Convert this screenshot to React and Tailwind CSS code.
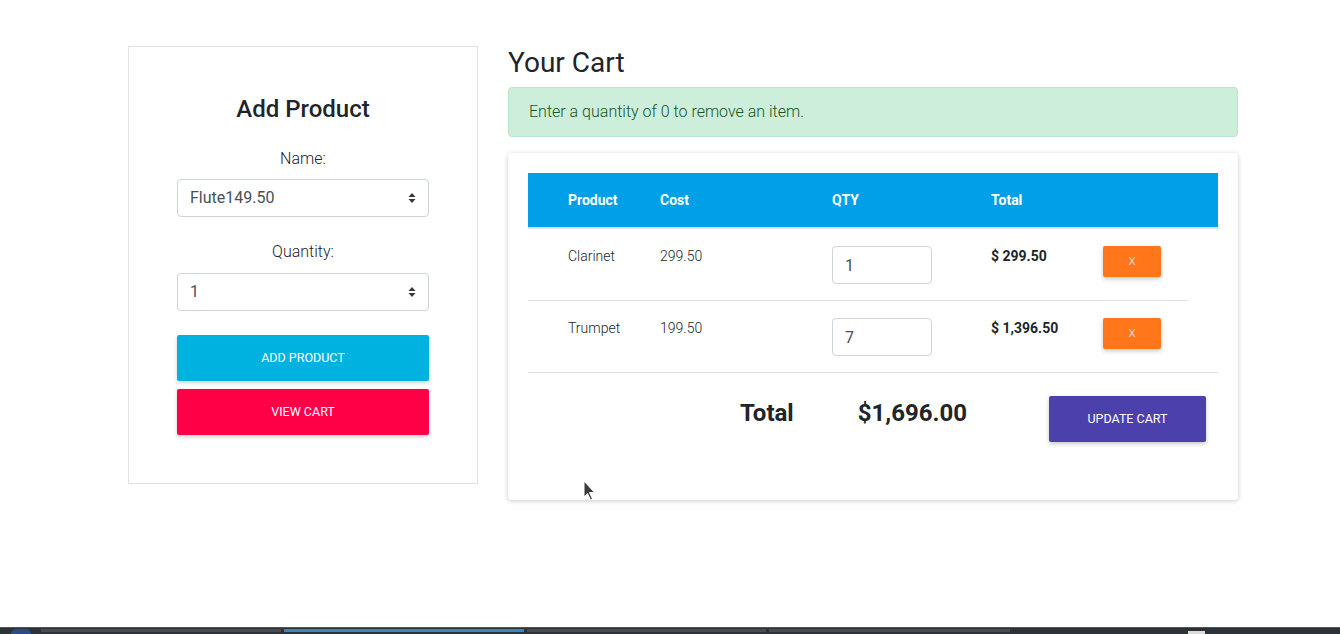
import React from 'react';

const items = [
  { name: 'Clarinet', cost: '299.50', qty: 1, total: '$ 299.50', line: 'w-[660px]' },
  { name: 'Trumpet', cost: '199.50', qty: 7, total: '$ 1,396.50', line: 'w-[690px]' },
];

const cols = 'grid grid-cols-[28px_92px_172px_159px_112px_127px]';

const SelectArrows = () => (
  <svg className="absolute right-[12px] top-1/2 -translate-y-1/2" width="8" height="12" viewBox="0 0 8 12">
    <path d="M4 1 L7.5 5 H0.5 Z" fill="#343a40" />
    <path d="M4 11 L7.5 7 H0.5 Z" fill="#343a40" />
  </svg>
);

const FakeSelect = ({ value }) => (
  <div className="relative w-[252px] h-[38px] mx-auto border border-[#ced4da] rounded-[4px] bg-white flex items-center pl-[12px] text-[16px] text-[#495057]">
    {value}
    <SelectArrows />
  </div>
);

export default function App() {
  return (
    <div className="h-[634px] flex flex-col bg-white text-[#212529] font-['Roboto',sans-serif] overflow-hidden">
      <div className="flex-1 flex pt-[46px] pl-[128px] gap-[30px]">
        {/* Add product card */}
        <div className="w-[350px] h-[438px] border border-[#dee2e6] pt-[48px] flex flex-col items-center">
          <h2 className="text-[24px] leading-[29px] font-medium">Add Product</h2>
          <div className="mt-[23px] text-[16px] leading-[24px] font-light">Name:</div>
          <div className="mt-[8px] w-full">
            <FakeSelect value="Flute149.50" />
          </div>
          <div className="mt-[23px] text-[16px] leading-[24px] font-light">Quantity:</div>
          <div className="mt-[9px] w-full">
            <FakeSelect value="1" />
          </div>
          <button className="mt-[24px] w-[252px] h-[46px] rounded-[2px] bg-[#00b2e0] text-white text-[12.5px] uppercase shadow-[0_2px_4px_rgba(0,0,0,0.18)]">
            Add Product
          </button>
          <button className="mt-[8px] w-[252px] h-[46px] rounded-[2px] bg-[#ff0047] text-white text-[12.5px] uppercase shadow-[0_2px_4px_rgba(0,0,0,0.18)]">
            View Cart
          </button>
        </div>

        {/* Cart */}
        <div className="w-[730px]">
          <h1 className="text-[28px] leading-[33px] font-normal mb-2">Your Cart</h1>
          <div className="h-[50px] border border-[#b9e6c9] bg-[#cdeedb] rounded-[4px] px-[20px] flex items-center text-[16px] font-light text-[#155724]">
            Enter a quantity of 0 to remove an item.
          </div>

          <div className="relative mt-4 rounded-[4px] bg-white shadow-[0_1px_5px_rgba(0,0,0,0.22)] p-[20px] h-[347px]">
            <div className={`${cols} h-[54px] items-center bg-[#00a0e9] text-white text-[14px] font-bold`}>
              <div />
              <div className="px-3">Product</div>
              <div className="px-3">Cost</div>
              <div className="px-3">QTY</div>
              <div className="px-3">Total</div>
              <div />
            </div>
            <div className="h-[2px] bg-[#dee2e6]" />

            {items.map((item) => (
              <div key={item.name}>
                <div className={`${cols} pt-[17px] pb-[16px] text-[14px] leading-[21px]`}>
                  <div />
                  <div className="px-3 font-light">{item.name}</div>
                  <div className="px-3 font-light">{item.cost}</div>
                  <div className="px-3">
                    <div className="w-[100px] h-[38px] border border-[#ced4da] rounded-[4px] flex items-center pl-[12px] text-[16px] text-[#495057]">
                      {item.qty}
                    </div>
                  </div>
                  <div className="px-3 font-bold">{item.total}</div>
                  <div className="px-3">
                    <button className="w-[58px] h-[31px] rounded-[2px] bg-[#ff761b] text-white text-[11px] font-light shadow-[0_2px_4px_rgba(0,0,0,0.22)]">
                      X
                    </button>
                  </div>
                </div>
                <div className={`${item.line} h-px bg-[#dee2e6]`} />
              </div>
            ))}

            {/* Footer */}
            <div className="flex items-start pt-[23px]">
              <div className="ml-[212px] mt-[3px] text-[24px] leading-[29px] font-bold">Total</div>
              <div className="ml-[64px] mt-[3px] text-[24px] leading-[29px] font-bold">$1,696.00</div>
              <button className="ml-[82px] w-[157px] h-[46px] rounded-[2px] bg-[#4c40ad] text-white text-[12.5px] uppercase shadow-[0_2px_4px_rgba(0,0,0,0.22)]">
                Update Cart
              </button>
            </div>

            {/* mouse pointer */}
            <svg className="absolute left-[75px] top-[327px]" width="13" height="21" viewBox="0 0 13 21">
              <path d="M1 1 L1 17 L4.5 13.5 L7.5 20 L9.5 19 L6.5 12.5 L11.5 12.5 Z" fill="#3a3a3a" stroke="#ffffff" strokeWidth="1" />
            </svg>
          </div>
        </div>
      </div>

      {/* taskbar strip */}
      <div className="h-[7px] bg-[#2d3237] border-t border-[#50555a] flex items-start pt-[1px]">
        <div className="w-[41px] flex justify-center">
          <div className="w-[20px] h-[5px] rounded-t-full bg-[#2a4d8a]" />
        </div>
        <div className="w-[240px] h-[3px] bg-[#474d53]" />
        <div className="ml-[3px] w-[240px] h-[3px] bg-[#3a87c0]" />
        <div className="ml-[3px] w-[239px] h-[3px] bg-[#474d53]" />
        <div className="ml-[3px] w-[241px] h-[3px] bg-[#474d53]" />
        <div className="ml-[178px] mt-[2px] w-[17px] h-[4px] bg-[#dcdcdc]" />
      </div>
    </div>
  );
}
